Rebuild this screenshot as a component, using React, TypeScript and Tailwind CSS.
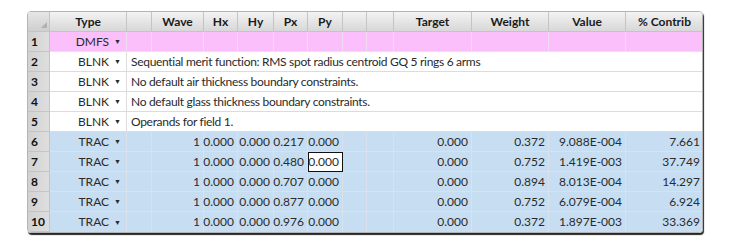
import React from "react";

const cols =
  "grid grid-cols-[22px_77px_25px_52px_34px_36px_34px_35px_24px_27px_78px_77px_77px_77px]";

const headers = ["Type", "", "Wave", "Hx", "Hy", "Px", "Py", "", "", "Target", "Weight", "Value", "% Contrib"];

type Row =
  | { kind: "dmfs" }
  | { kind: "blnk"; comment: string }
  | { kind: "trac"; vals: string[]; sel?: number };

const rows: Row[] = [
  { kind: "dmfs" },
  { kind: "blnk", comment: "Sequential merit function: RMS spot radius centroid GQ 5 rings 6 arms" },
  { kind: "blnk", comment: "No default air thickness boundary constraints." },
  { kind: "blnk", comment: "No default glass thickness boundary constraints." },
  { kind: "blnk", comment: "Operands for field 1." },
  { kind: "trac", vals: ["", "1", "0.000", "0.000", "0.217", "0.000", "", "", "0.000", "0.372", "9.088E-004", "7.661"] },
  { kind: "trac", vals: ["", "1", "0.000", "0.000", "0.480", "0.000", "", "", "0.000", "0.752", "1.419E-003", "37.749"], sel: 5 },
  { kind: "trac", vals: ["", "1", "0.000", "0.000", "0.707", "0.000", "", "", "0.000", "0.894", "8.013E-004", "14.297"] },
  { kind: "trac", vals: ["", "1", "0.000", "0.000", "0.877", "0.000", "", "", "0.000", "0.752", "6.079E-004", "6.924"] },
  { kind: "trac", vals: ["", "1", "0.000", "0.000", "0.976", "0.000", "", "", "0.000", "0.372", "1.897E-003", "33.369"] },
];

function TypeCell({ name, line }: { name: string; line: string }) {
  return (
    <div className={`flex items-center justify-end gap-[5px] border-r border-b pr-[5px] ${line}`}>
      <span>{name}</span>
      <span className="text-[7px] leading-none">▼</span>
    </div>
  );
}

function RowNum({ n, last }: { n: number; last: boolean }) {
  return (
    <div
      className={`flex items-center border-r border-b border-[#c4c4c4] bg-gradient-to-r from-[#d2d2d2] to-[#dedede] pl-[3px] font-bold text-[#111] ${
        last ? "rounded-bl-[4px]" : ""
      }`}
    >
      {n}
    </div>
  );
}

export default function App() {
  return (
    <div className="h-[246px] w-[748px] bg-white pl-[27px] pt-[11px] font-['Lato','Noto_Sans',sans-serif] text-[12px] text-[#2a2a2a]">
      <div className="w-[676px] overflow-hidden rounded-[4px] border border-[#b4b4b4] shadow-[1px_2px_1px_rgba(0,0,0,0.85)]">
        <div className={`${cols} h-[20px] bg-gradient-to-b from-[#f3f3f3] to-[#d6d6d6] font-bold text-[#1a1a1a]`}>
          <div className="relative border-r border-b border-[#c4c4c4] bg-gradient-to-b from-[#e6e6e6] to-[#cfcfcf]">
            <svg className="absolute right-[2px] bottom-[3px]" width="6" height="6" viewBox="0 0 6 6">
              <polygon points="6,0 6,6 0,6" fill="#b0b0b0" />
            </svg>
          </div>
          {headers.map((h, i) => (
            <div
              key={i}
              className="flex items-center justify-center border-r border-b border-[#c4c4c4] last:border-r-0"
            >
              {h}
            </div>
          ))}
        </div>
        {rows.map((r, idx) => {
          const n = idx + 1;
          const last = idx === rows.length - 1;
          if (r.kind === "dmfs") {
            return (
              <div key={n} className={`${cols} h-[20px] bg-[#fbbffb]`}>
                <RowNum n={n} last={last} />
                <TypeCell name="DMFS" line="border-[#f0dcf0]" />
                {headers.slice(1).map((_, i) => (
                  <div key={i} className="border-r border-b border-[#f0dcf0] last:border-r-0" />
                ))}
              </div>
            );
          }
          if (r.kind === "blnk") {
            return (
              <div key={n} className={`${cols} h-[20px] bg-white`}>
                <RowNum n={n} last={last} />
                <TypeCell name="BLNK" line="border-[#dcdcdc]" />
                <div className="col-span-12 flex items-center whitespace-nowrap border-b border-[#dcdcdc] pl-[4px] tracking-[-0.3px]">
                  {r.comment}
                </div>
              </div>
            );
          }
          return (
            <div key={n} className={`${cols} h-[20px] bg-[#c7def2]`}>
              <RowNum n={n} last={last} />
              <TypeCell name="TRAC" line={last ? "border-b-0 border-[#d9e2ec]" : "border-[#d9e2ec]"} />
              {r.vals.map((v, i) =>
                r.sel === i ? (
                  <div
                    key={i}
                    className="flex items-center justify-end border-[1.5px] border-[#111] bg-white pr-[3px]"
                  >
                    {v}
                  </div>
                ) : (
                  <div
                    key={i}
                    className={`flex items-center justify-end border-r border-[#d9e2ec] pr-[3px] last:border-r-0 ${
                      last ? "" : "border-b"
                    }`}
                  >
                    {v}
                  </div>
                )
              )}
            </div>
          );
        })}
      </div>
    </div>
  );
}
